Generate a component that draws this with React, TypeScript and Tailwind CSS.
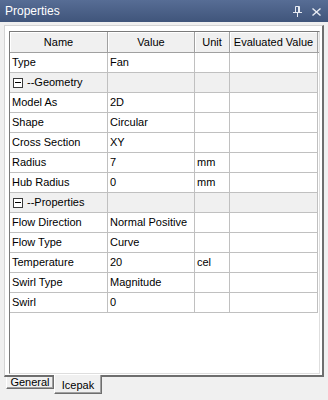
import React from "react";

type Row =
  | { kind: "cat"; label: string }
  | { kind: "row"; name: string; value: string; unit?: string };

const rows: Row[] = [
  { kind: "row", name: "Type", value: "Fan" },
  { kind: "cat", label: "--Geometry" },
  { kind: "row", name: "Model As", value: "2D" },
  { kind: "row", name: "Shape", value: "Circular" },
  { kind: "row", name: "Cross Section", value: "XY" },
  { kind: "row", name: "Radius", value: "7", unit: "mm" },
  { kind: "row", name: "Hub Radius", value: "0", unit: "mm" },
  { kind: "cat", label: "--Properties" },
  { kind: "row", name: "Flow Direction", value: "Normal Positive" },
  { kind: "row", name: "Flow Type", value: "Curve" },
  { kind: "row", name: "Temperature", value: "20", unit: "cel" },
  { kind: "row", name: "Swirl Type", value: "Magnitude" },
  { kind: "row", name: "Swirl", value: "0" },
];

function MinusBox() {
  return (
    <span className="inline-flex w-[10px] h-[10px] border border-[#3a3a3a] bg-white items-center justify-center mr-[4px]">
      <span className="block w-[6px] h-[1px] bg-black" />
    </span>
  );
}

export default function App() {
  return (
    <div className="w-[328px] h-[400px] bg-[#f0f0f0] font-['Liberation_Sans',Arial,sans-serif] text-[11px] text-black overflow-hidden">
      {/* Title bar */}
      <div className="h-[22px] flex items-center bg-gradient-to-b from-[#576d95] to-[#40557b] pl-[5px] pr-[7px]">
        <span className="text-white text-[12px] leading-none">Properties</span>
        <div className="ml-auto flex items-center gap-[10px] pt-[1px]">
          <svg width="9" height="11" viewBox="0 0 9 11" className="text-[#e6eaf2]">
            <path d="M2.5 0.5 H6.5 M2.5 0.5 V6 M6.5 0.5 V6 M5.5 0.5 V6 M0 6.5 H9 M4.5 6.5 V11" stroke="currentColor" strokeWidth="1" fill="none" />
          </svg>
          <svg width="9" height="8" viewBox="0 0 9 8" className="text-[#e6eaf2]">
            <path d="M0.5 0.5 L8.5 7.5 M8.5 0.5 L0.5 7.5" stroke="currentColor" strokeWidth="1.4" fill="none" />
          </svg>
        </div>
      </div>

      {/* Frame */}
      <div className="ml-[4px] mt-[3px] w-[320px] h-[352px] bg-white border-l border-t border-l-[#d4d4d4] border-t-[#d4d4d4] border-r-2 border-b-2 border-r-[#6e6e6e] border-b-[#6e6e6e] pl-[4px] pt-[5px]">
        <div className="w-[311px] h-[343px] bg-white border-l border-t border-l-[#7a7a7a] border-t-[#7a7a7a] border-r border-b border-r-[#dedede] border-b-[#dedede]">
          {/* Header */}
          <div className="flex h-[21px] border-b border-[#a0a0a0] bg-[#f0f0f0]">
            {[
              { t: "Name", w: "w-[98px]" },
              { t: "Value", w: "w-[87px]" },
              { t: "Unit", w: "w-[35px]" },
              { t: "Evaluated Value", w: "w-[88px]" },
            ].map((c) => (
              <div
                key={c.t}
                className={`${c.w} h-full flex items-center justify-center border-r border-[#a0a0a0] shadow-[inset_1px_1px_0_#ffffff]`}
              >
                {c.t}
              </div>
            ))}
          </div>
          {/* Rows */}
          {rows.map((r, i) =>
            r.kind === "cat" ? (
              <div key={i} className="flex h-[20px] border-b border-[#c0c0c0] bg-[#f0f0f0] w-[308px]">
                <div className="w-[98px] h-full flex items-center pl-[3px] border-r border-[#c0c0c0]">
                  <MinusBox />
                  <span>{r.label}</span>
                </div>
                <div className="w-[87px] h-full border-r border-[#c0c0c0]" />
                <div className="w-[35px] h-full border-r border-[#c0c0c0]" />
                <div className="w-[88px] h-full border-r border-[#c0c0c0]" />
              </div>
            ) : (
              <div key={i} className="flex h-[20px] border-b border-[#c0c0c0] w-[308px]">
                <div className="w-[98px] h-full flex items-center pl-[2px] border-r border-[#c0c0c0] whitespace-nowrap overflow-hidden">
                  {r.name}
                </div>
                <div className="w-[87px] h-full flex items-center pl-[2px] border-r border-[#c0c0c0] whitespace-nowrap overflow-hidden">
                  {r.value}
                </div>
                <div className="w-[35px] h-full flex items-center pl-[2px] border-r border-[#c0c0c0] whitespace-nowrap overflow-hidden">
                  {r.unit ?? ""}
                </div>
                <div className="w-[88px] h-full border-r border-[#c0c0c0]" />
              </div>
            )
          )}
        </div>
      </div>

      {/* Tabs */}
      <div className="flex items-start pl-[6px]">
        <div className="w-[48px] h-[12px] mt-0 flex items-center justify-center border-l border-l-[#ffffff] border-r border-b border-r-[#6e6e6e] border-b-[#6e6e6e] shadow-[inset_-1px_-1px_0_#a0a0a0] leading-none">
          General
        </div>
        <div className="relative w-[48px] h-[19px] -mt-[2px] bg-[#f0f0f0] flex items-center justify-center pt-[2px] border-l border-l-[#ffffff] border-r border-b border-r-[#6e6e6e] border-b-[#6e6e6e] shadow-[inset_-1px_-1px_0_#a0a0a0] leading-none">
          Icepak
        </div>
      </div>
    </div>
  );
}
